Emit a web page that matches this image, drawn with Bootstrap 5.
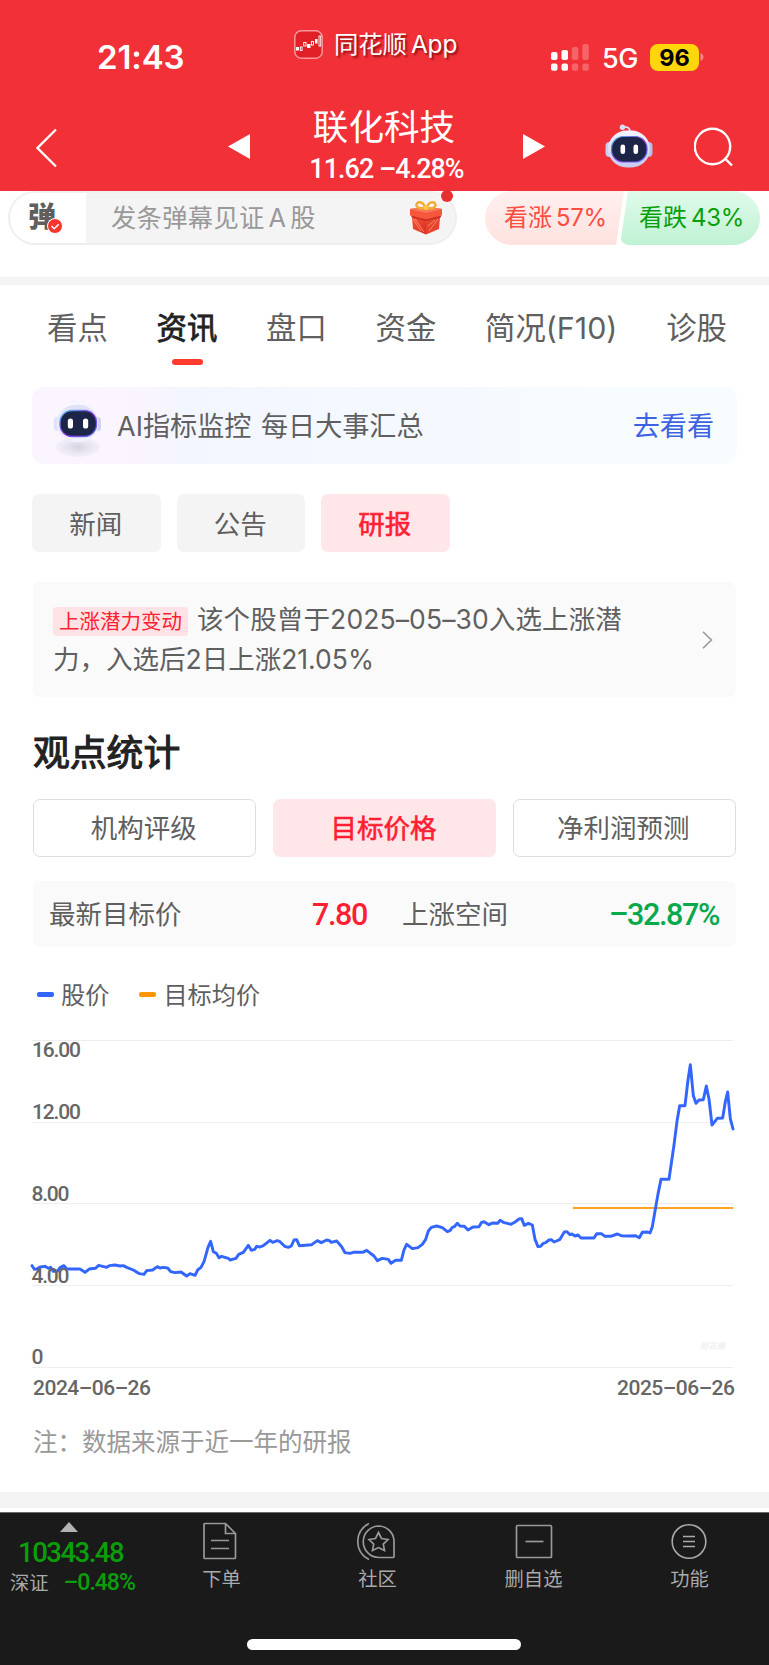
<!DOCTYPE html>
<html lang="zh-CN">
<head>
<meta charset="utf-8">
<meta name="viewport" content="width=device-width, initial-scale=1">
<title>联化科技</title>
<link href="https://cdn.jsdelivr.net/npm/bootstrap@5.3.0/dist/css/bootstrap.min.css" rel="stylesheet">
<style>
  body{font-family:Inter,"Noto Sans CJK SC",sans-serif;color:#5f5f5f;background:#fff;font-size:26.5px;line-height:1;overflow-x:hidden}
  svg{display:block;flex:none}
  .num{font-family:Roboto,"Noto Sans CJK SC",sans-serif;font-weight:500}
  span,h1,h2{white-space:nowrap}
  .app-head{height:191px;background:#f23037;color:#fff}
  .status-row{height:90px;padding:0 65px 0 97px}
  .clock{font-size:33px;font-weight:600;width:197px;padding-top:41px;letter-spacing:-.1px}
  .app-name{font-size:24.4px;text-shadow:2px 2px 2px rgba(90,0,0,.65);margin-left:11px;padding-top:30px;width:217px;line-height:28px;letter-spacing:-.1px}
  .net{font-size:27px;font-weight:500;margin:45px 0 0 13px;width:48px;letter-spacing:-.5px}
  .battery{width:49px;height:27px;border-radius:8px;background:#ffd60a;color:#000;font-size:23.5px;font-weight:700;margin-top:44px;padding-top:1px}
  .title-row{height:101px;padding-left:36px}
  .stock{font-size:35.6px;font-weight:400;line-height:44px;margin:0 5px 0 0;padding-top:16px}
  .quote{font-size:26.8px;line-height:32px;padding-top:3px;letter-spacing:-.9px}
  .dm-row{height:86px;padding-left:8px}
  .dm-pill{width:449px;height:54px;border:2px solid #eeeeef;border-top-color:#f1f1f1;border-radius:27px;background:#f4f4f4;position:relative}
  .dm-switch{width:76px;height:50px;background:#fff;border-radius:25px 0 0 25px;padding:10px 0 0 18px;font-size:28px;font-weight:900;position:relative}
  .dm-check{position:absolute;left:37px;top:25px}
  .dm-text{font-size:25.3px;color:#999;margin-left:25px;letter-spacing:.3px}
  .dot{position:absolute;left:431px;top:-3px;width:12px;height:12px;border-radius:50%;background:#e93030}
  .vote{height:54px;font-size:24px}
  .vote .ms-1{letter-spacing:-.3px}
  .vote-up{width:139px;margin-left:28px;padding-left:19px;color:#fd4c40;background:linear-gradient(#fff0ef,#fee2df);border-radius:27px 0 9px 27px;clip-path:polygon(0 0,100% 0,131px 100%,0 100%)}
  .vote-down{width:140px;margin-left:-4px;padding-left:19px;color:#0a9f0a;background:linear-gradient(#e0faeb,#bff2d4);border-radius:0 27px 27px 9px;clip-path:polygon(8px 0,100% 0,100% 100%,0 100%)}
  .band{height:8px;background:#f4f4f4}
  .tabs-row{height:102px;font-size:30.4px;padding:22px 42px 0 47px}
  .tabs-row span{line-height:43px}
  .tab-on{color:#222;-webkit-text-stroke:.8px #222;position:relative}
  .tab-on i{position:absolute;left:15px;bottom:-15px;width:31px;height:6px;border-radius:3px;background:#ff3b30}
  .banner{margin:0 32px;height:77px;border-radius:12px;background:linear-gradient(90deg,#fbf5ff 0,#f9f5ff 18%,#f3f6ff 21%,#f5f9ff 60%,#f7fcff 80%,#f7fcff);padding:0 23px 0 21px;font-size:27.1px}
  .banner span{padding-top:2px}
  .go{color:#3d62e2}
  .cat-row{margin:30px 32px 0;gap:16px}
  .pill-btn{width:128.5px;height:58px;border-radius:7px;background:#f4f4f4;padding:2px 1px 0 0}
  .hot{background:#ffe7e9!important;color:#ff1e32;border-color:#ffe7e9!important;-webkit-text-stroke:.6px #ff1e32}
  .notice{margin:30px 33px 0;height:115px;border-radius:7px;background:#fafafa;padding:17px 23px 0 20px;line-height:40.5px}
  .tag{display:inline-flex;align-items:center;height:29px;width:135px;justify-content:center;background:#fde3e5;border-radius:4px;color:#ff1e32;font-size:20.5px;margin-right:9px;line-height:29px;letter-spacing:0;position:relative;top:-1px}
  .lead-line{letter-spacing:.12px}
  .sec-title{font-size:36.8px;font-weight:400;color:#222;-webkit-text-stroke:1.1px #222;margin:34px 33px 0;line-height:44px;height:68px}
  .seg{margin:0 33px;gap:16.5px}
  .seg div{flex:1;height:58px;border:1px solid #dedede;border-radius:7px;padding-right:2px}
  .stat{margin:24px 33px 0;height:66px;border-radius:7px;background:#fafafa;padding:1px 17px 0 16px}
  .stat .num{font-size:30.5px;padding-top:2px;letter-spacing:-1.4px}
  .legend-row{height:73px;padding:22px 37px 0;font-size:24.2px;line-height:56px}
  .legend-row i{width:17px;height:4.5px;border-radius:2px;margin-right:7px}
  .legend-row span{padding-top:2px}
  .note{height:82px;padding:0 33px;font-size:24.5px;color:#999;line-height:65px}
  .bottom{height:153px;background:#1a1a1a;border-top:1px solid #6b6b6b;color:#aaa;font-size:19.3px;margin-top:4px;position:relative}
  .idx{width:144px;color:#0a9f0a}
  .item{width:156px;padding-top:9px}
  .item svg{position:relative;left:-2px}
  .item span{margin:8px 1px 0 0;line-height:22px}
  .homebar{position:absolute;left:247px;top:126px;width:274px;height:10.5px;border-radius:6px;background:#fff}
</style>
</head>
<body>
<svg width="0" height="0" style="position:absolute">
  <defs>
    <linearGradient id="shell" x1="0" y1="0" x2="0" y2="1"><stop offset="0" stop-color="#f5f4ff"/><stop offset="1" stop-color="#c6cbee"/></linearGradient>
    <linearGradient id="shellPale" x1="0" y1="0" x2="0" y2="1"><stop offset="0" stop-color="#dfe1f6"/><stop offset="1" stop-color="#f3f1ff"/></linearGradient>
    <linearGradient id="rim" x1="0" y1="0" x2="1" y2="1"><stop offset="0" stop-color="#46c6f0"/><stop offset=".5" stop-color="#8c38df"/><stop offset="1" stop-color="#5b70ff"/></linearGradient>
    <linearGradient id="box" x1="0" y1="0" x2="1" y2="1"><stop offset="0" stop-color="#f9593c"/><stop offset="1" stop-color="#d92d20"/></linearGradient>
    <radialGradient id="shade"><stop offset="0" stop-color="#d5d3e0"/><stop offset="1" stop-color="#f1ecf9" stop-opacity=".7"/></radialGradient>
    <symbol id="bot" viewBox="0 0 48 44">
      <path d="M17 3c5-.8 8 .5 8 5" fill="none" stroke="#dfdff5" stroke-width="1.800"/><circle cx="17.500" cy="3.200" r="2.700" fill="#dcdcf4"/>
      <rect x=".5" y="18" width="8" height="15" rx="4" fill="#c9cdf3"/><rect x="39.500" y="18" width="8" height="15" rx="4" fill="#b8bce8"/>
      <rect x="3" y="6.500" width="42" height="37" rx="18.500" fill="url(#shell)"/>
      <rect x="6.500" y="12.500" width="35.500" height="25.500" rx="12" fill="#1c2447" stroke="url(#rim)" stroke-width="1.200"/>
      <rect x="15.500" y="20.500" width="4.600" height="9.500" rx="2.300" fill="#fff"/><rect x="28.500" y="20.500" width="4.600" height="9.500" rx="2.300" fill="#fff"/>
    </symbol>
  </defs>
</svg>

<header class="app-head">
  <div class="status-row d-flex align-items-start">
    <span class="clock">21:43</span>
    <svg width="29" height="29" viewBox="0 0 29 29" style="margin-top:29.500px">
      <rect x=".8" y=".8" width="27.400" height="27.400" rx="6.500" fill="#e11f26" stroke="#f6989b" stroke-width="1.500"/>
      <g fill="#fff"><rect x="2" y="17" width="3" height="3.500"/><rect x="13" y="14" width="3.500" height="4"/><rect x="21" y="9" width="2.500" height="4.500"/></g>
      <g fill="none" stroke="#fff" stroke-width=".9"><rect x="6.300" y="17" width="1.800" height="3.500"/><rect x="9.700" y="12.500" width="2.300" height="3.500"/><rect x="17.500" y="11.500" width="2" height="3.500"/><rect x="25" y="6" width="1.700" height="10"/></g>
    </svg>
    <span class="app-name">同花顺<span class="ms-1">App</span></span>
    <svg width="38" height="27" viewBox="0 0 38 27" fill="#fff" style="margin-top:44px">
      <rect y="8" width="6.500" height="8" rx="2"/><rect y="19.500" width="6.500" height="7.200" rx="2"/>
      <rect x="10.500" y="6" width="6.500" height="10" rx="2"/><rect x="10.500" y="19.500" width="6.500" height="7.200" rx="2"/>
      <g opacity=".25"><rect x="20.800" y="3" width="6.500" height="13" rx="2"/><rect x="20.800" y="19.500" width="6.500" height="7.200" rx="2"/><rect x="31.300" width="6.500" height="16" rx="2"/><rect x="31.300" y="19.500" width="6.500" height="7.200" rx="2"/></g>
    </svg>
    <span class="net">5G</span>
    <div class="battery d-flex align-items-center justify-content-center">96</div>
    <svg width="5" height="8" viewBox="0 0 5 8" style="margin-top:53px"><path d="M1.500 0c4 1.500 4 6.500 0 8z" fill="#f98589"/></svg>
  </div>
  <div class="title-row d-flex">
    <svg width="22" height="40" viewBox="0 0 22 40" style="margin-top:37.500px"><path d="M20 1.500 1.500 20 20 38.500" fill="none" stroke="#fff" stroke-width="2.300"/></svg>
    <svg width="22" height="25" viewBox="0 0 22 25" style="margin:44px 0 0 170px"><path d="M22 0v25L0 12.500z" fill="#fff"/></svg>
    <div class="text-center" style="width:273px"><h1 class="stock">联化科技</h1><div class="quote num">11.62 –4.28%</div></div>
    <svg width="22" height="25" viewBox="0 0 22 25" style="margin-top:44px"><path d="M0 0v25l22-12.500z" fill="#fff"/></svg>
    <svg width="48" height="44" style="margin:34px 0 0 60px"><use href="#bot"/></svg>
    <svg width="40" height="40" viewBox="0 0 40 40" style="margin:37px 0 0 41px" fill="none" stroke="#fff" stroke-width="2.400"><circle cx="18.500" cy="19.500" r="17.700"/><path d="m30.500 31 7.500 7.500"/></svg>
  </div>
</header>

<div class="dm-row d-flex">
  <div class="dm-pill d-flex align-items-center">
    <div class="dm-switch">弹
      <svg class="dm-check" width="16" height="16" viewBox="0 0 16 16"><circle cx="8" cy="8" r="7.500" fill="#fa352e" stroke="#fff"/><path d="m4.500 8 2.700 2.700 4.500-4.500" fill="none" stroke="#fff" stroke-width="1.600"/></svg>
    </div>
    <span class="dm-text">发条弹幕见证<span class="mx-1">A</span>股</span>
    <svg class="ms-auto" width="32" height="36" viewBox="0 0 32 36" style="margin-right:13px">
      <path d="M1.500 12 16 16v18.500L3 29z" fill="url(#box)"/><path d="M30.500 12 16 16v18.500L29 29z" fill="#e5432d"/>
      <path d="M0 9 16 6.500 32 9v6.500L16 19.500 0 15.500z" fill="#f5563c"/><path d="M0 9 16 6.500 32 9l-16 4z" fill="#f9795c"/>
      <path d="m16 19.500 15-3.800v1.500L16 21 1.500 17.200v-1.500z" fill="#c22f20"/>
      <path d="m5 19 9 13M19 31l9-12M18 26l7-6M3 19l8 12" stroke="#ff8565" stroke-width="1"/>
      <g fill="none" stroke="#f2ab35" stroke-width="2.500"><path d="M15 8C6 10 5 4 8 2.500 12 1 15 5 15 8zM17 8c9 2 10-4 7-5.500C20 1 17 5 17 8z"/></g><rect x="13.500" y="5.500" width="5" height="4.500" rx="2" fill="#ffc545"/>
    </svg>
    <div class="dot"></div>
  </div>
  <div class="vote vote-up d-flex align-items-center">看涨<span class="ms-1">57%</span></div>
  <div class="vote vote-down d-flex align-items-center">看跌<span class="ms-1">43%</span></div>
</div>
<div class="band"></div>

<nav class="tabs-row d-flex justify-content-between align-items-start">
  <span>看点</span><span class="tab-on">资讯<i></i></span><span>盘口</span><span>资金</span><span>简况(F10)</span><span>诊股</span>
</nav>

<div class="banner d-flex align-items-center">
  <svg width="50" height="60" viewBox="0 0 50 60" style="margin-top:4px">
    <ellipse cx="25" cy="49" rx="22" ry="10" fill="url(#shade)"/>
    <path d="M18 3c5-.8 7 .5 7 5" fill="none" stroke="#f4f3fd" stroke-width="2"/><circle cx="19" cy="3.500" r="2.500" fill="#f4f3fd"/>
    <rect x="1" y="19" width="7" height="14" rx="3.500" fill="#dfe1f8"/><rect x="41" y="19" width="7" height="14" rx="3.500" fill="#cdd0f0"/>
    <rect x="3.500" y="7" width="42" height="37" rx="18.500" fill="url(#shellPale)"/>
    <rect x="7" y="12.500" width="36.500" height="26" rx="12" fill="#1c2447" stroke="url(#rim)" stroke-width="1.300"/>
    <rect x="14.800" y="20.500" width="5.200" height="10" rx="2.600" fill="#fff"/><rect x="30" y="20.500" width="5.200" height="10" rx="2.600" fill="#fff"/>
  </svg>
  <span style="margin-left:14px;word-spacing:2px">AI指标监控 每日大事汇总</span>
  <span class="go ms-auto">去看看</span>
</div>

<div class="cat-row d-flex">
  <div class="pill-btn d-flex align-items-center justify-content-center">新闻</div>
  <div class="pill-btn d-flex align-items-center justify-content-center">公告</div>
  <div class="pill-btn hot d-flex align-items-center justify-content-center">研报</div>
</div>

<div class="notice d-flex justify-content-between">
  <div style="height:81px"><div class="d-flex align-items-center lead-line" style="height:41px"><span class="tag" style="top:2px">上涨潜力变动</span><span>该个股曾于2025–05–30入选上涨潜</span></div><div style="line-height:39px">力，入选后2日上涨21.05%</div></div>
  <svg width="11" height="18" viewBox="0 0 11 18" style="margin-top:32px"><path d="m1 .7 8.500 8.300L1 17.300" fill="none" stroke="#999" stroke-width="1.600"/></svg>
</div>

<h2 class="sec-title">观点统计</h2>
<div class="seg d-flex">
  <div class="d-flex align-items-center justify-content-center">机构评级</div>
  <div class="hot d-flex align-items-center justify-content-center">目标价格</div>
  <div class="d-flex align-items-center justify-content-center">净利润预测</div>
</div>

<div class="stat d-flex align-items-center">
  <span>最新目标价</span><span class="num ms-auto" style="color:#ff1e32">7.80</span>
  <span style="margin-left:35px;width:213px">上涨空间</span><span class="num" style="color:#07a94b;width:104px;display:flex;justify-content:flex-end">–32.87%</span>
</div>

<div class="legend-row d-flex align-items-center">
  <i style="background:#3366ff"></i><span>股价</span><i style="background:#ff9500;margin-left:30px"></i><span>目标均价</span>
</div>

<svg width="769" height="390" viewBox="0 1020 769 390">
  <path d="M32 1040.500H733M32 1122.500H733M32 1203.500H733M32 1285.500H733M32 1367.500H733" stroke="#eee"/>
  <path d="M573 1208H733" stroke="#ffa21f" stroke-width="2"/>
  <g transform="translate(0 1020) scale(.33333)" fill="none" stroke="#3366ff" stroke-width="8.800" stroke-linejoin="round" stroke-linecap="round">
    <path d="M96 737 103 748 110 747 120 741 135 739 145 745 152 742 160 754 172 754 180 743 192 737 200 747 240 747 255 757 268 747 286 745 296 736 320 742 328 737 345 735 360 738 370 737 380 742 400 750 418 761 432 763 440 752 458 750 472 740 480 744 490 742 503 744 512 755 525 758 543 756 560 768 570 761 585 766 593 750 603 742 612 725 624 682 632 664 640 695 649 700 657 713 665 709 685 715 690 720 708 715 716 703 730 697 745 676 754 691 764 688 770 679 780 681 790 677 810 661 818 667 832 662 840 665 854 679 865 682 874 678 882 660 890 659 898 677 935 674 952 662 964 668 980 660 988 662 994 667 1010 663 1025 680 1035 698 1050 700 1060 697 1088 697 1100 691 1122 708 1132 722 1147 715 1165 718 1173 730 1187 721 1204 721 1212 690 1220 673 1237 686 1254 683 1267 673 1277 658 1285 633 1294 622 1310 618 1327 623 1342 635 1350 632 1357 622 1363 620 1372 610 1380 618 1393 619 1404 630 1419 621 1437 620 1444 608 1452 605 1467 614 1477 609 1493 610 1500 601 1510 607 1533 613 1544 607 1557 597 1565 596 1573 616 1585 610 1597 615 1605 658 1614 680 1622 679 1630 670 1637 668 1647 660 1654 659 1662 666 1679 659 1693 636 1701 635 1710 644 1716 642 1725 648 1734 645 1743 654 1782 654 1790 641 1804 641 1815 649 1832 649 1852 642 1864 647 1887 648 1907 647 1918 653 1927 637 1943 636 1950 639 1957 620 1967 562 1975 517 1983 478 2007 478 2022 375 2031 304 2039 257 2055 257 2064 180 2071 134 2080 227 2088 250 2097 240 2110 239 2119 198 2127 237 2136 315 2152 295 2168 294 2176 245 2183 216 2191 296 2199 327"/>
  </g>
  <g class="num" font-size="21" fill="#666">
    <text x="32" y="1057" textLength="49">16.00</text><text x="32" y="1119" textLength="49">12.00</text><text x="31.500" y="1201" textLength="38">8.00</text><text x="31.500" y="1283" textLength="38">4.00</text><text x="31.500" y="1364">0</text>
    <text x="33" y="1394.500" textLength="118">2024–06–26</text><text x="617" y="1394.500" textLength="118">2025–06–26</text>
  </g>
  <text x="700" y="1348.500" font-size="8" font-weight="900" font-style="italic" fill="#f1f1f1" textLength="25">同花顺</text>
</svg>
<div class="note">注：数据来源于近一年的研报</div>
<div class="band" style="height:16px"></div>

<footer class="bottom d-flex">
  <div class="idx">
    <svg width="18" height="10" viewBox="0 0 18 10" style="margin:9px 0 0 60px"><path d="M0 10 9 0l9 10z" fill="#b3b3b3"/></svg>
    <div class="num" style="font-size:27.500px;margin:7px 0 0 18px;line-height:27px;letter-spacing:-1.500px">10343.48</div>
    <div class="d-flex align-items-center" style="margin:4px 0 0 10px;line-height:26px"><span style="color:#aaa">深证</span><span class="num" style="font-size:23px;margin-left:15px;letter-spacing:-1px">–0.48%</span></div>
  </div>
  <div class="item d-flex flex-column align-items-center">
    <svg width="36" height="38" viewBox="0 0 36 38" fill="none" stroke="#999" stroke-width="1.700"><path d="M3 1.500H23.500L33.500 11.500V35.500q0 1-1 1H3q-1 0-1-1V2.500q0-1 1-1zM23.500 1.500V11.500H33.500M9 18.500H27M9 26.500H27"/></svg><span>下单</span>
  </div>
  <div class="item d-flex flex-column align-items-center">
    <svg width="40" height="38" viewBox="0 0 40 38" fill="none" stroke="#999" stroke-width="1.700"><path d="M23 4A15.500 15.500 0 1 0 23 35.500H37q1 0 1-1V20A15.500 15.500 0 0 0 23 4zM13 1.500C-2 9-2 30 13 37.500M22.500 10.500l3 6 6.500 1-4.700 4.600 1.200 6.500-6-3-6 3 1.200-6.500-4.700-4.600 6.500-1z"/></svg><span>社区</span>
  </div>
  <div class="item d-flex flex-column align-items-center">
    <svg width="38" height="38" viewBox="0 0 38 38" fill="none" stroke="#999" stroke-width="1.700" style="left:0"><rect x="1.500" y="3.500" width="35" height="32" rx="1"/><path d="M10.500 19.500h18"/></svg><span>删自选</span>
  </div>
  <div class="item d-flex flex-column align-items-center">
    <svg width="38" height="38" viewBox="0 0 38 38" fill="none" stroke="#aaa" stroke-width="1.600" style="left:-1px"><circle cx="19" cy="19.500" r="16.800"/><path d="M13 14.500h12M13 19.500h12M13 24.500h12"/></svg><span>功能</span>
  </div>
  <div class="homebar"></div>
</footer>
<script src="https://cdn.jsdelivr.net/npm/bootstrap@5.3.0/dist/js/bootstrap.bundle.min.js"></script>
</body>
</html>
